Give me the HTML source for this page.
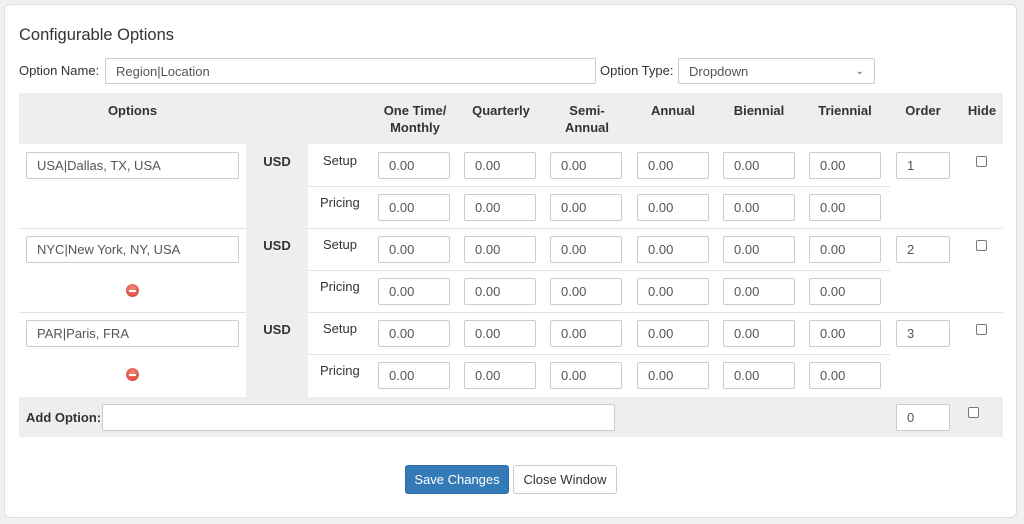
<!DOCTYPE html>
<html><head><meta charset="utf-8"><style>
*{box-sizing:border-box;margin:0;padding:0}
body{width:1024px;height:524px;background:#f0f0f0;font-family:"Liberation Sans",sans-serif;font-size:13px;color:#333;position:relative;overflow:hidden}
.panel{position:absolute;left:4px;top:4px;width:1013px;height:514px;background:#fff;border:1px solid #ddd;border-radius:6px}
.a{position:absolute}
.in{position:absolute;height:27px;border:1px solid #ccc;border-radius:2px;background:#fff;padding-left:10px;line-height:25px;font-size:13px;color:#555}
.p{width:72px}
.o{width:54px}
.g{position:absolute;background:#eee}
.h{position:absolute;font-weight:bold;text-align:center;line-height:17px;color:#333}
.cb{position:absolute;width:11px;height:11px;border:1px solid #777;border-radius:2px;background:#fff}
.rm{position:absolute;width:13px;height:13px;border-radius:50%;background:radial-gradient(circle at 50% 35%,#f08a7e,#d9382a);}
.rm:after{content:"";position:absolute;left:3px;top:5.5px;width:7px;height:2px;background:#fff}
.line{position:absolute;height:1px;background:#e3e3e3}
.lbl{position:absolute;color:#333}
</style></head><body>
<div class="panel"></div>
<div class="a" style="left:19px;top:26px;font-size:16.5px;color:#333">Configurable Options</div>
<div class="lbl" style="left:19px;top:63px">Option Name:</div>
<div class="in" style="left:105px;top:58px;width:491px;height:26px">Region|Location</div>
<div class="lbl" style="left:600px;top:63px">Option Type:</div>
<div class="in" style="left:678px;top:58px;width:197px;height:26px">Dropdown<span style="position:absolute;right:10px;top:0;font-size:10px">&#8964;</span></div>

<div class="g" style="left:19px;top:93px;width:984px;height:51px"></div>
<div class="h" style="left:19px;top:102px;width:227px">Options</div>
<div class="h" style="left:372px;top:102px;width:86px">One Time/<br>Monthly</div>
<div class="h" style="left:458px;top:102px;width:86px">Quarterly</div>
<div class="h" style="left:544px;top:102px;width:86px">Semi-<br>Annual</div>
<div class="h" style="left:630px;top:102px;width:86px">Annual</div>
<div class="h" style="left:716px;top:102px;width:86px">Biennial</div>
<div class="h" style="left:802px;top:102px;width:86px">Triennial</div>
<div class="h" style="left:890px;top:102px;width:66px">Order</div>
<div class="h" style="left:960px;top:102px;width:44px">Hide</div>

<div class="g" style="left:246px;top:144px;width:62px;height:253px"></div>
<div class="line" style="left:308px;top:186px;width:582px"></div>
<div class="line" style="left:19px;top:228px;width:227px"></div><div class="line" style="left:308px;top:228px;width:695px"></div>
<div class="line" style="left:308px;top:270px;width:582px"></div>
<div class="line" style="left:19px;top:312px;width:227px"></div><div class="line" style="left:308px;top:312px;width:695px"></div>
<div class="line" style="left:308px;top:354px;width:582px"></div>

<!-- row 1 -->
<div class="in" style="left:26px;top:152px;width:213px">USA|Dallas, TX, USA</div>
<div class="h" style="left:246px;top:153px;width:62px">USD</div>
<div class="lbl" style="left:323px;top:153px">Setup</div>
<div class="lbl" style="left:320px;top:195px">Pricing</div>
<div class="in p" style="left:378px;top:152px">0.00</div><div class="in p" style="left:464px;top:152px">0.00</div><div class="in p" style="left:550px;top:152px">0.00</div><div class="in p" style="left:637px;top:152px">0.00</div><div class="in p" style="left:723px;top:152px">0.00</div><div class="in p" style="left:809px;top:152px">0.00</div>
<div class="in p" style="left:378px;top:194px">0.00</div><div class="in p" style="left:464px;top:194px">0.00</div><div class="in p" style="left:550px;top:194px">0.00</div><div class="in p" style="left:637px;top:194px">0.00</div><div class="in p" style="left:723px;top:194px">0.00</div><div class="in p" style="left:809px;top:194px">0.00</div>
<div class="in o" style="left:896px;top:152px">1</div>
<div class="cb" style="left:976px;top:156px"></div>

<!-- row 2 -->
<div class="in" style="left:26px;top:236px;width:213px">NYC|New York, NY, USA</div>
<div class="rm" style="left:126px;top:284px"></div>
<div class="h" style="left:246px;top:237px;width:62px">USD</div>
<div class="lbl" style="left:323px;top:237px">Setup</div>
<div class="lbl" style="left:320px;top:279px">Pricing</div>
<div class="in p" style="left:378px;top:236px">0.00</div><div class="in p" style="left:464px;top:236px">0.00</div><div class="in p" style="left:550px;top:236px">0.00</div><div class="in p" style="left:637px;top:236px">0.00</div><div class="in p" style="left:723px;top:236px">0.00</div><div class="in p" style="left:809px;top:236px">0.00</div>
<div class="in p" style="left:378px;top:278px">0.00</div><div class="in p" style="left:464px;top:278px">0.00</div><div class="in p" style="left:550px;top:278px">0.00</div><div class="in p" style="left:637px;top:278px">0.00</div><div class="in p" style="left:723px;top:278px">0.00</div><div class="in p" style="left:809px;top:278px">0.00</div>
<div class="in o" style="left:896px;top:236px">2</div>
<div class="cb" style="left:976px;top:240px"></div>

<!-- row 3 -->
<div class="in" style="left:26px;top:320px;width:213px">PAR|Paris, FRA</div>
<div class="rm" style="left:126px;top:368px"></div>
<div class="h" style="left:246px;top:321px;width:62px">USD</div>
<div class="lbl" style="left:323px;top:321px">Setup</div>
<div class="lbl" style="left:320px;top:363px">Pricing</div>
<div class="in p" style="left:378px;top:320px">0.00</div><div class="in p" style="left:464px;top:320px">0.00</div><div class="in p" style="left:550px;top:320px">0.00</div><div class="in p" style="left:637px;top:320px">0.00</div><div class="in p" style="left:723px;top:320px">0.00</div><div class="in p" style="left:809px;top:320px">0.00</div>
<div class="in p" style="left:378px;top:362px">0.00</div><div class="in p" style="left:464px;top:362px">0.00</div><div class="in p" style="left:550px;top:362px">0.00</div><div class="in p" style="left:637px;top:362px">0.00</div><div class="in p" style="left:723px;top:362px">0.00</div><div class="in p" style="left:809px;top:362px">0.00</div>
<div class="in o" style="left:896px;top:320px">3</div>
<div class="cb" style="left:976px;top:324px"></div>

<!-- add option -->
<div class="g" style="left:19px;top:397px;width:984px;height:40px"></div>
<div class="a" style="left:26px;top:410px;font-weight:bold">Add Option:</div>
<div class="in" style="left:102px;top:404px;width:513px"></div>
<div class="in o" style="left:896px;top:404px">0</div>
<div class="cb" style="left:968px;top:407px"></div>

<div class="a" style="left:405px;top:465px;width:104px;height:29px;background:#337ab7;border:1px solid #2e6da4;border-radius:3px;color:#fff;text-align:center;line-height:27px">Save Changes</div>
<div class="a" style="left:513px;top:465px;width:104px;height:29px;background:#fff;border:1px solid #ccc;border-radius:3px;color:#333;text-align:center;line-height:27px">Close Window</div>
</body></html>
